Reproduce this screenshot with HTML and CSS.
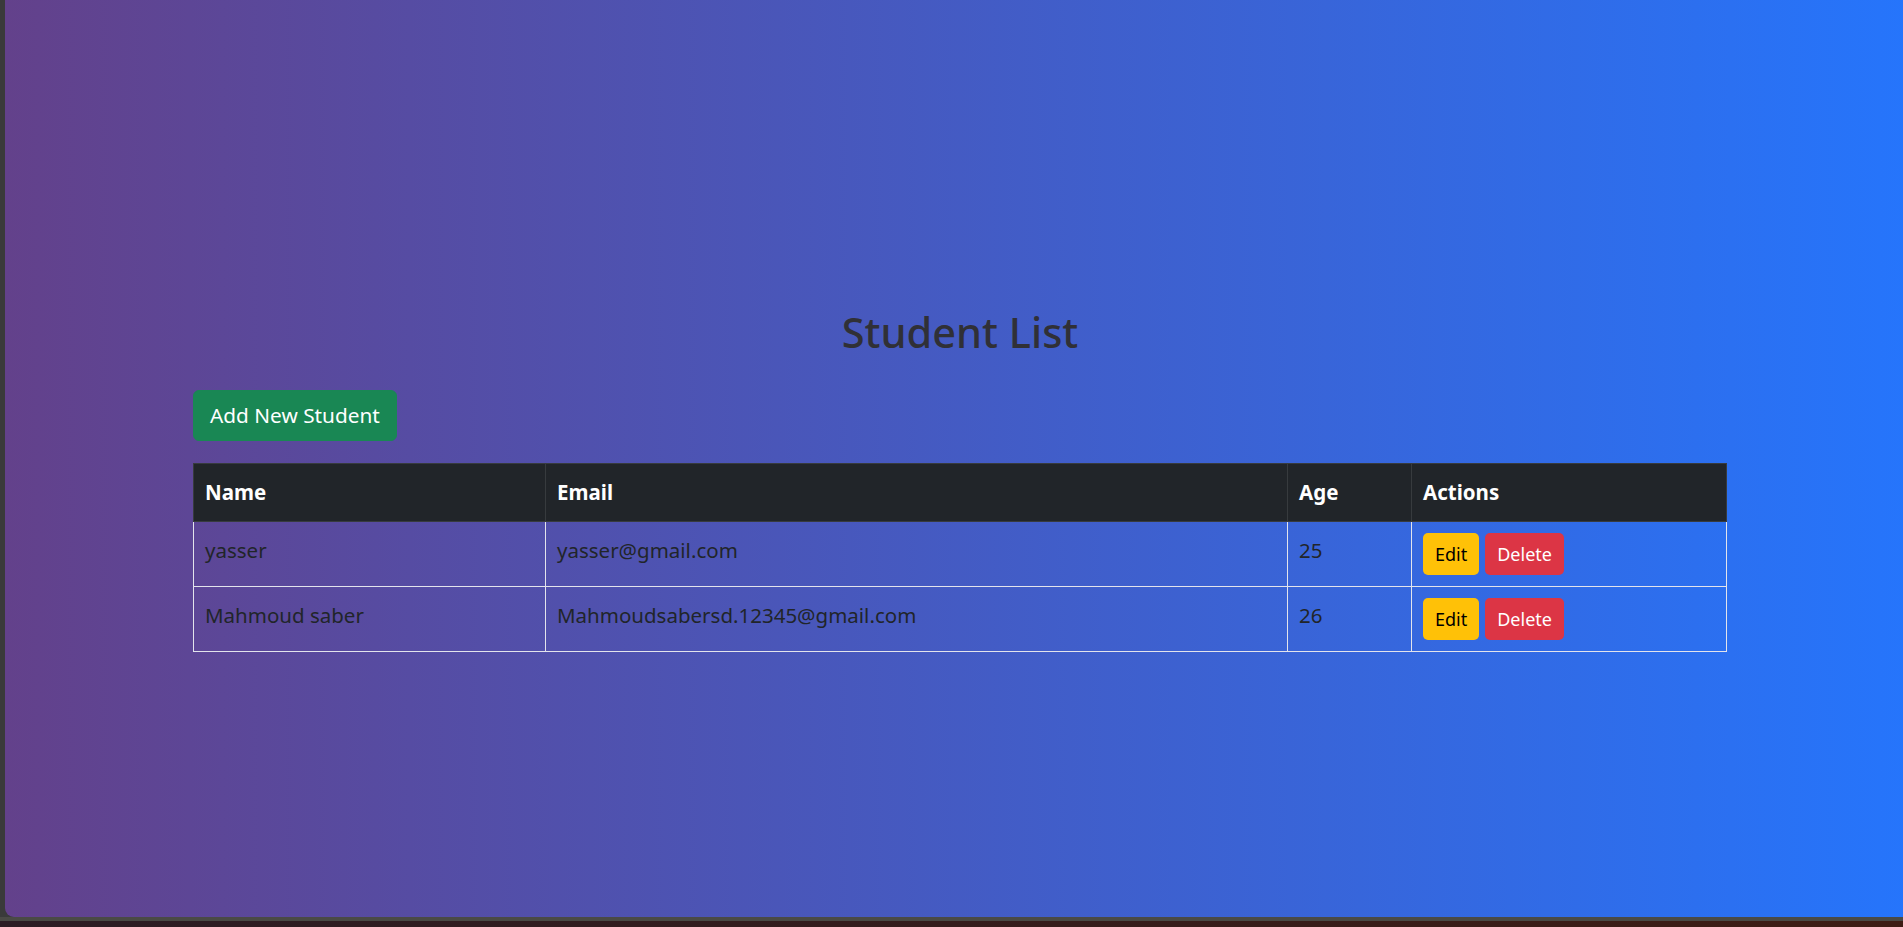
FILE: index.html
```html
<!DOCTYPE html>
<html lang="en">
<head>
<meta charset="utf-8">
<title>Student List</title>
<link rel="stylesheet" href="styles.css">
</head>
<body>
<div class="window">
  <div class="container">
    <h2 class="title">Student List</h2>
    <a class="btn btn-success">Add New Student</a>
    <table class="table">
      <thead>
        <tr>
          <th class="col-name">Name</th>
          <th class="col-email">Email</th>
          <th class="col-age">Age</th>
          <th class="col-actions">Actions</th>
        </tr>
      </thead>
      <tbody>
        <tr>
          <td>yasser</td>
          <td>yasser@gmail.com</td>
          <td>25</td>
          <td class="actions"><a class="btn-sm btn-warning">Edit</a><a class="btn-sm btn-danger">Delete</a></td>
        </tr>
        <tr>
          <td>Mahmoud saber</td>
          <td>Mahmoudsabersd.12345@gmail.com</td>
          <td>26</td>
          <td class="actions"><a class="btn-sm btn-warning">Edit</a><a class="btn-sm btn-danger">Delete</a></td>
        </tr>
      </tbody>
    </table>
  </div>
</div>
<div class="taskbar"></div>
</body>
</html>
```
FILE: styles.css
```css
html, body {
  margin: 0;
  padding: 0;
}
body {
  width: 1903px;
  height: 927px;
  overflow: hidden;
  background: #3a3a3a;
  font-family: "Noto Sans", "Open Sans", sans-serif;
  font-size: 20.5px;
  line-height: 30px;
  color: #212529;
}
.window {
  margin-left: 5px;
  width: 1910px;
  height: 917px;
  background: linear-gradient(to right, #63418b, #2575fc);
  border-bottom-left-radius: 9px;
  overflow: hidden;
}
.container {
  width: 1534px;
  margin: 0 auto;
  padding-top: 308px;
}
.title {
  margin: 0 0 34px;
  font-size: 41.5px;
  line-height: 48px;
  font-weight: 500;
  text-align: center;
  color: #303036;
}
.btn {
  display: inline-block;
  padding: 9px 16px 10px;
  border: 1px solid transparent;
  border-radius: 6px;
  font-size: 20.8px;
  line-height: 30px;
  text-decoration: none;
}
.btn-success {
  background: #198754;
  border-color: #198754;
  color: #ffffff;
}
.table {
  margin-top: 22px;
  width: 1534px;
  border-collapse: collapse;
  table-layout: fixed;
}
.col-name { width: 329px; }
.col-email { width: 719px; }
.col-age { width: 101px; }
.table th {
  background: #212529;
  color: #ffffff;
  font-weight: 700;
  text-align: left;
  padding: 13px 11px 14px;
  border: 1px solid #373b3e;
}
.table td {
  padding: 13px 11px 8px;
  border: 1px solid #e3e4ec;
  vertical-align: top;
  text-align: left;
}
.table td.actions {
  padding-top: 11px;
  padding-bottom: 11px;
}
.btn-sm {
  display: inline-block;
  height: 42px;
  padding: 0 12px;
  border-radius: 5px;
  font-size: 18px;
  line-height: 42px;
  box-sizing: border-box;
  text-decoration: none;
  vertical-align: top;
}
.btn-sm + .btn-sm {
  margin-left: 6px;
}
.btn-warning {
  background: #ffc107;
  color: #000000;
}
.btn-danger {
  background: #dc3545;
  color: #ffffff;
}
.taskbar {
  height: 10px;
  border-top: 4px solid #4a4a45;
  background: linear-gradient(to right, #2c1c24, #3e1c14);
}
```
